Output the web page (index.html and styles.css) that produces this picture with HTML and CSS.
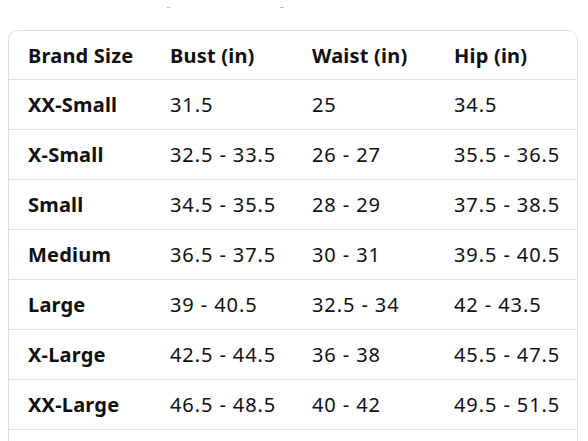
FILE: index.html
```html
<!DOCTYPE html>
<html>
<head>
<meta charset="utf-8">
<link rel="stylesheet" href="styles.css">
</head>
<body>
<div class="topmarks"><span class="mark mark-a"></span><span class="mark mark-b"></span></div>
<div class="card">
  <table class="sizes">
    <thead>
      <tr><th>Brand Size</th><th>Bust (in)</th><th>Waist (in)</th><th>Hip (in)</th></tr>
    </thead>
    <tbody>
      <tr><th>XX-Small</th><td>31.5</td><td>25</td><td>34.5</td></tr>
      <tr><th>X-Small</th><td>32.5 - 33.5</td><td>26 - 27</td><td>35.5 - 36.5</td></tr>
      <tr><th>Small</th><td>34.5 - 35.5</td><td>28 - 29</td><td>37.5 - 38.5</td></tr>
      <tr><th>Medium</th><td>36.5 - 37.5</td><td>30 - 31</td><td>39.5 - 40.5</td></tr>
      <tr><th>Large</th><td>39 - 40.5</td><td>32.5 - 34</td><td>42 - 43.5</td></tr>
      <tr><th>X-Large</th><td>42.5 - 44.5</td><td>36 - 38</td><td>45.5 - 47.5</td></tr>
      <tr><th>XX-Large</th><td>46.5 - 48.5</td><td>40 - 42</td><td>49.5 - 51.5</td></tr>
    </tbody>
  </table>
</div>
</body>
</html>
```
FILE: styles.css
```css
html, body {
  margin: 0;
  padding: 0;
  background: #ffffff;
}
body {
  padding: 0 11px 0 8px;
  font-family: "Noto Sans", "Open Sans", sans-serif;
  color: #0f1111;
}
.topmarks {
  height: 30px;
  display: flex;
  align-items: flex-start;
  padding-top: 7px;
  box-sizing: border-box;
}
.mark {
  display: block;
  height: 1px;
  background: #b8bcbc;
}
.mark-a {
  width: 3px;
  margin-left: 159px;
}
.mark-b {
  width: 4px;
  margin-left: 110px;
}
.card {
  width: 568px;
  border: 1px solid #dcdfdf;
  border-radius: 10px;
  padding-bottom: 40px;
}
.sizes {
  width: 100%;
  table-layout: fixed;
  border-collapse: collapse;
  font-size: 20px;
}
.sizes th, .sizes td {
  text-align: left;
  padding: 0 0 0 19px;
  height: 49px;
  vertical-align: middle;
  white-space: nowrap;
}
.sizes thead th {
  height: 48px;
}
.sizes th {
  font-weight: 700;
  letter-spacing: 0.2px;
}
.sizes td {
  font-weight: 400;
  letter-spacing: 0.9px;
}
.sizes tr {
  border-bottom: 1px solid #dfe2e2;
}
```
